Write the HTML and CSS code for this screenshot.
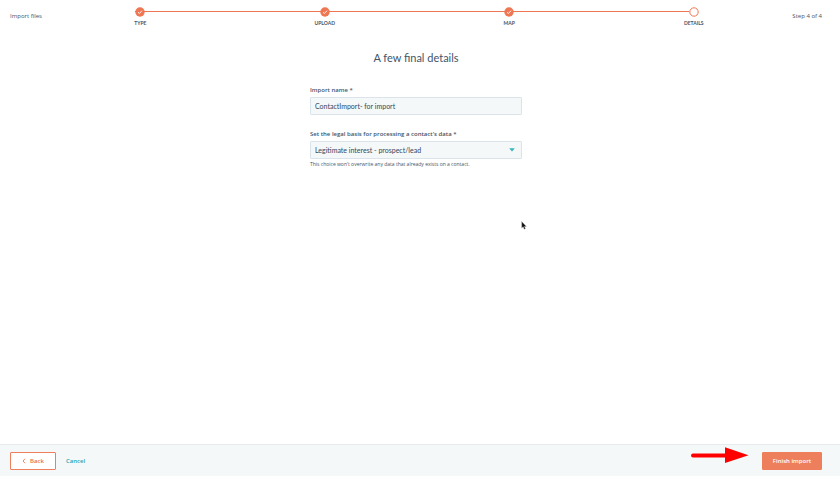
FILE: index.html
```html
<!DOCTYPE html>
<html lang="en">
<head>
    <meta charset="UTF-8">
    <meta name="viewport" content="width=device-width, initial-scale=1.0">
    <title>Import files</title>
    <link rel="stylesheet" href="styles.css">
</head>
<body>

<header class="topbar">
    <span class="topbar-title">Import files</span>
    <ol class="steps">
        <li class="step">
            <svg class="step-icon" viewBox="0 0 10 10"><circle cx="5" cy="5" r="4.7" fill="#ee7653"/><path d="M3 5.2l1.4 1.3L7 3.7" fill="none" stroke="#fff" stroke-width="0.9"/></svg>
            <span>TYPE</span>
        </li>
        <li class="step">
            <svg class="step-icon" viewBox="0 0 10 10"><circle cx="5" cy="5" r="4.7" fill="#ee7653"/><path d="M3 5.2l1.4 1.3L7 3.7" fill="none" stroke="#fff" stroke-width="0.9"/></svg>
            <span>UPLOAD</span>
        </li>
        <li class="step">
            <svg class="step-icon" viewBox="0 0 10 10"><circle cx="5" cy="5" r="4.7" fill="#ee7653"/><path d="M3 5.2l1.4 1.3L7 3.7" fill="none" stroke="#fff" stroke-width="0.9"/></svg>
            <span>MAP</span>
        </li>
        <li class="step">
            <svg class="step-icon" viewBox="0 0 10 10"><circle cx="5" cy="5" r="4.2" fill="#fff" stroke="#ee7653" stroke-width="1"/></svg>
            <span>DETAILS</span>
        </li>
    </ol>
    <span class="topbar-count">Step 4 of 4</span>
</header>

<main class="content">
    <h1>A few final details</h1>
    <form id="import-form" class="details-form">
        <div class="field">
            <label for="import-name">Import name *</label>
            <input type="text" id="import-name" value="ContactImport- for import" required>
        </div>
        <div class="field">
            <label for="legal-basis">Set the legal basis for processing a contact's data *</label>
            <div class="select-wrap">
                <select id="legal-basis" required>
                    <option>Legitimate interest - prospect/lead</option>
                    <option>Legitimate interest - existing customer</option>
                    <option>Not applicable</option>
                </select>
                <svg class="caret" viewBox="0 0 6 4"><path d="M0.2 0.3h5.6L3 3.6z" fill="#35b5bd"/></svg>
            </div>
            <p class="help">This choice won't overwrite any data that already exists on a contact.</p>
        </div>
    </form>
    <svg class="pointer" viewBox="0 0 6 9"><path d="M0.7 0.5v6.6l1.5-1.3 1 2.5 1.2-.5-1-2.4h2z" fill="#111" stroke="#bbb" stroke-width="0.4"/></svg>
</main>

<footer class="actions">
    <button type="button" class="btn btn-back">
        <svg class="chevron" viewBox="0 0 4 6"><path d="M3 0.8L1 3l2 2.2" fill="none" stroke="#ee7653" stroke-width="0.9"/></svg>
        Back
    </button>
    <a href="#" class="cancel">Cancel</a>
    <svg class="arrow" viewBox="0 0 58 16"><path d="M2 8.4H36" stroke="#f00" stroke-width="4" stroke-linecap="round"/><path d="M34 0.3L57.5 8.2 34 16z" fill="#f00"/></svg>
    <button type="submit" form="import-form" class="btn btn-primary">Finish import</button>
</footer>

</body>
</html>
```

FILE: styles.css
```css
* {
    box-sizing: border-box;
}
body {
    font-family: "Open Sans", "Liberation Sans", sans-serif;
    font-size: 6px;
    line-height: 10px;
    color: #425568;
    background: #fff;
    margin: 0;
    min-height: 100vh;
    padding-bottom: 5px;
    display: flex;
    flex-direction: column;
}
.topbar {
    display: grid;
    grid-template-columns: 38px 1fr 36px;
    padding: 7px 18px 0 10px;
}
.topbar-title,
.topbar-count {
    padding-top: 4px;
    white-space: nowrap;
}
.topbar-count {
    text-align: right;
}
.steps {
    display: flex;
    list-style: none;
    margin: 0;
    padding: 0;
}
.step {
    flex: 1;
    position: relative;
    display: flex;
    flex-direction: column;
    align-items: center;
    font-family: Lato, "Liberation Sans", sans-serif;
    font-size: 5px;
    line-height: 6px;
    font-weight: 700;
    gap: 3px;
}
.step + .step::before {
    content: "";
    position: absolute;
    top: 4px;
    right: 50%;
    width: 100%;
    height: 1px;
    margin-right: 5px;
    background: #ee7653;
}
.step-icon {
    position: relative;
    z-index: 1;
    width: 10px;
    height: 10px;
}
.content {
    flex: 1;
    position: relative;
    padding: 24px 8px 20px 0;
}
h1 {
    margin: 0 0 19px;
    font-family: Lato, "Liberation Sans", sans-serif;
    font-size: 11px;
    line-height: 16px;
    font-weight: 400;
    text-align: center;
}
.details-form {
    width: 212px;
    max-width: 100%;
    margin: 0 auto;
}
.field {
    margin-bottom: 14px;
}
.field label {
    display: block;
    margin-bottom: 2px;
    font-weight: 600;
}
.field input,
.field select {
    display: block;
    width: 100%;
    height: 18px;
    padding: 0 4px;
    font-family: Lato, "Liberation Sans", sans-serif;
    font-size: 7px;
    color: #33475b;
    background: #f4f8f9;
    border: 1px solid #dbe4eb;
    border-radius: 1px;
    appearance: none;
}
.select-wrap {
    position: relative;
}
.caret {
    position: absolute;
    right: 7px;
    top: 7px;
    width: 6px;
    height: 4px;
    pointer-events: none;
}
.help {
    margin: 0;
    font-size: 5px;
}
.pointer {
    position: absolute;
    left: 62%;
    top: 195px;
    width: 6px;
    height: 9px;
}
.actions {
    display: flex;
    align-items: center;
    padding: 7px 18px 6px 10px;
    background: #f4f8f8;
    border-top: 1px solid #e6ecee;
}
.btn {
    height: 18px;
    padding: 0;
    font: inherit;
    font-weight: 600;
    border: 1px solid #ee7f5d;
    border-radius: 1px;
}
.btn-back {
    display: flex;
    align-items: center;
    justify-content: center;
    gap: 4px;
    width: 46px;
    color: #e66e4c;
    background: #fff;
}
.btn-primary {
    width: 60px;
    color: #fff;
    background: #ee7f5d;
}
.chevron {
    width: 4px;
    height: 6px;
}
.cancel {
    margin-left: 10px;
    font-weight: 600;
    color: #25a5b5;
    text-decoration: none;
}
/* points at the finish button, slightly above its middle */
.arrow {
    align-self: flex-start;
    width: 58px;
    height: 16px;
    margin: -5px 13px 0 auto;
}
```
